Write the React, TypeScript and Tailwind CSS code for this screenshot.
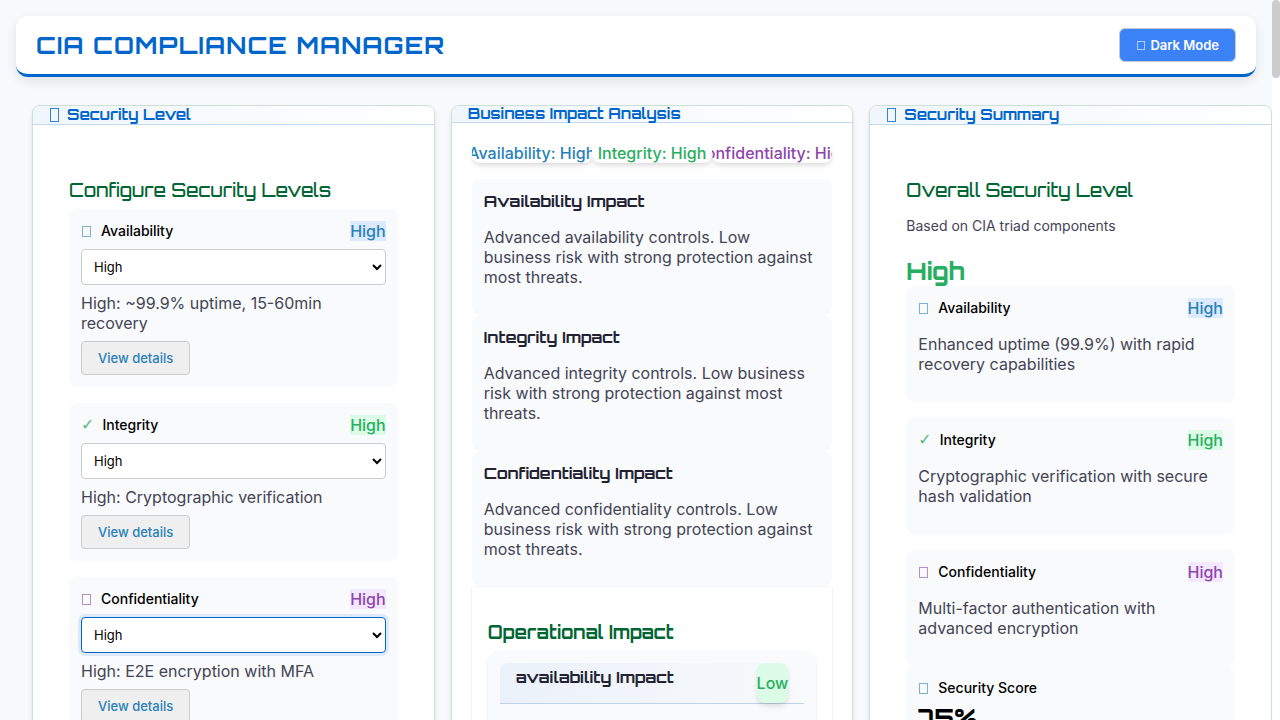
import type { ReactNode } from "react";

type Tone = "blue" | "green" | "purple";

const display = "font-['Orbitron','DejaVu_Sans',sans-serif]";

const toneText: Record<Tone, string> = {
  blue: "text-[#2980b9]",
  green: "text-[#27ae60]",
  purple: "text-[#8e44ad]",
};

const toneBadge: Record<Tone, string> = {
  blue: "bg-[#dbeafe] text-[#2980b9]",
  green: "bg-[#dcfce7] text-[#27ae60]",
  purple: "bg-[#f3e8ff] text-[#8e44ad]",
};

function Glyph({ tone, check }: { tone: Tone; check?: boolean }) {
  if (check) {
    return <span className={`mr-2 font-['DejaVu_Sans',sans-serif] text-base leading-5 opacity-80 ${toneText[tone]}`}>✓</span>;
  }
  return (
    <span
      aria-hidden="true"
      className={`mr-2.5 ml-px inline-block h-[11px] w-[9px] border border-current opacity-60 ${toneText[tone]}`}
    />
  );
}

function Widget({ title, icon, children }: { title: string; icon?: boolean; children: ReactNode }) {
  return (
    <section className="min-w-0 overflow-hidden rounded-lg border border-[#cce0d6] bg-white shadow-md">
      <header
        className={`flex items-center border-b border-[#bfd9f2] bg-linear-to-r from-[#f0f6fc] to-white px-4 text-[#0066cc] ${
          icon ? "h-[19px]" : "h-[17px]"
        }`}
      >
        {icon && (
          <span aria-hidden="true" className="mr-2 ml-px inline-block h-3.5 w-[9px] border border-current opacity-80" />
        )}
        <h2 className={`${display} text-[15px] leading-4 font-bold`}>{title}</h2>
      </header>
      {children}
    </section>
  );
}

function RowHead({ label, tone, check, htmlFor }: { label: string; tone: Tone; check?: boolean; htmlFor?: string }) {
  return (
    <div className="flex h-5 items-center justify-between">
      <div className="flex items-center">
        <Glyph tone={tone} check={check} />
        {htmlFor ? (
          <label htmlFor={htmlFor} className="text-sm font-medium text-black">
            {label}
          </label>
        ) : (
          <h4 className="text-sm font-medium text-black">{label}</h4>
        )}
      </div>
      <span className={`leading-5 font-medium ${toneBadge[tone]}`}>High</span>
    </div>
  );
}

const components: {
  id: string;
  name: string;
  tone: Tone;
  check?: boolean;
  option: string;
  summary: string;
  focused?: boolean;
}[] = [
  {
    id: "availability",
    name: "Availability",
    tone: "blue",
    option: "High: ~99.9% uptime, 15-60min recovery",
    summary: "Enhanced uptime (99.9%) with rapid recovery capabilities",
  },
  {
    id: "integrity",
    name: "Integrity",
    tone: "green",
    check: true,
    option: "High: Cryptographic verification",
    summary: "Cryptographic verification with secure hash validation",
  },
  {
    id: "confidentiality",
    name: "Confidentiality",
    tone: "purple",
    option: "High: E2E encryption with MFA",
    summary: "Multi-factor authentication with advanced encryption",
    focused: true,
  },
];

const impacts = [
  {
    title: "Availability Impact",
    text: "Advanced availability controls. Low business risk with strong protection against most threats.",
  },
  {
    title: "Integrity Impact",
    text: "Advanced integrity controls. Low business risk with strong protection against most threats.",
  },
  {
    title: "Confidentiality Impact",
    text: "Advanced confidentiality controls. Low business risk with strong protection against most threats.",
  },
];

export default function App() {
  return (
    <div className="flex h-screen overflow-hidden bg-[#f8f9fd] font-[Inter,sans-serif] text-base leading-5 text-[#444455]">
      <div className="min-w-0 flex-1">
        <div className="px-4 pt-4">
          <header className="flex items-center justify-between rounded-xl border-b-[3px] border-[#0066cc] bg-white px-5 py-3 shadow-[0_4px_12px_rgba(0,0,0,0.1)]">
            <h1 className={`${display} text-2xl font-bold tracking-wider text-[#0066cc]`}>
              CIA COMPLIANCE MANAGER
            </h1>
            <button
              type="button"
              className="flex h-[34px] items-center rounded-md border border-[#c4c8d0] bg-[#3b82f6] px-4 text-[13px] font-semibold text-white"
            >
              <span
                aria-hidden="true"
                className="mr-[5px] ml-px inline-block h-[9px] w-2 border border-current opacity-60"
              />
              Dark Mode
            </button>
          </header>
        </div>

        <main className="mt-7 grid grid-cols-3 gap-4 pl-8">
          <Widget title="Security Level" icon>
            <div className="px-9 pt-[53px] pb-9">
              <h3 className={`${display} text-lg leading-6 font-medium text-[#006633]`}>Configure Security Levels</h3>
              <div className="mt-[7px] flex flex-col gap-4">
                {components.map((c) => (
                  <div key={c.id} className="rounded-lg bg-[#f8fafc] p-3">
                    <RowHead label={c.name} tone={c.tone} check={c.check} htmlFor={c.id} />
                    <select
                      id={c.id}
                      defaultValue="High"
                      className={`mt-2 block h-9 w-full rounded border bg-white px-2 text-[13px] text-black ${
                        c.focused ? "border-[#0066cc] ring-3 ring-[#0066cc]/10" : "border-[#cccccc]"
                      }`}
                    >
                      <option>None</option>
                      <option>Low</option>
                      <option>Moderate</option>
                      <option>High</option>
                      <option>Very High</option>
                    </select>
                    <p className="mt-2">{c.option}</p>
                    <button
                      type="button"
                      className="mt-2 block h-[34px] rounded border border-[#cccccc] bg-[#efefef] px-4 text-[13px] font-medium text-[#2980b9]"
                    >
                      View details
                    </button>
                  </div>
                ))}
              </div>
            </div>
          </Widget>

          <Widget title="Business Impact Analysis">
            <div className="p-5">
              <div className="grid grid-cols-3">
                {components.map((c) => (
                  <div
                    key={c.id}
                    className={`flex justify-center overflow-hidden rounded-lg bg-white font-medium whitespace-nowrap shadow-md ${toneText[c.tone]}`}
                  >
                    <span>{c.name}: High</span>
                  </div>
                ))}
              </div>
              <div className="mt-4">
                {impacts.map((i) => (
                  <div key={i.title} className="rounded-lg bg-[#f8fafc] px-3 pt-3 pb-7">
                    <h3 className={`${display} text-base leading-5 font-bold text-[#222233]`}>{i.title}</h3>
                    <p className="mt-4">{i.text}</p>
                  </div>
                ))}
              </div>
              <div className="bg-white px-4 pt-[33px] pb-4 shadow-sm">
                <h3 className={`${display} text-lg leading-6 font-bold text-[#006633]`}>Operational Impact</h3>
                <div className="mt-[7px] rounded-xl bg-[#f8fafc] p-3 shadow-sm">
                  <div className="flex h-[41px] justify-between rounded-t-lg border-b border-[#bfd4ea] bg-linear-to-r from-[#ebf1fa] to-[#f8fafc] px-4">
                    <h4 className={`${display} pt-1 text-base leading-5 font-bold text-[#222233]`}>
                      availability Impact
                    </h4>
                    <span className="flex items-center rounded-lg bg-[#dcfce7] font-medium text-[#27ae60] shadow-md">
                      Low
                    </span>
                  </div>
                  <div className="h-40" />
                </div>
              </div>
            </div>
          </Widget>

          <Widget title="Security Summary" icon>
            <div className="px-9 pt-[53px] pb-9">
              <h3 className={`${display} text-lg leading-6 font-medium text-[#006633]`}>Overall Security Level</h3>
              <p className="mt-3.5 text-sm leading-5">Based on CIA triad components</p>
              <p className={`${display} mt-5 text-2xl leading-[30px] font-extrabold text-[#27ae60]`}>High</p>
              <div className="flex flex-col gap-4">
                {components.map((c) => (
                  <div key={c.id} className="rounded-lg bg-[#f8fafc] px-3 pt-3 pb-7">
                    <RowHead label={c.name} tone={c.tone} check={c.check} />
                    <p className="mt-4">{c.summary}</p>
                  </div>
                ))}
              </div>
              <div className="rounded-lg bg-[#f8fafc] p-3">
                <div className="flex h-5 items-center">
                  <Glyph tone="blue" />
                  <h4 className="text-sm font-medium text-black">Security Score</h4>
                </div>
                <p className={`${display} mt-1 text-2xl leading-[30px] font-extrabold text-black`}>75%</p>
              </div>
            </div>
          </Widget>
        </main>
      </div>
      <div aria-hidden="true" className="w-2 shrink-0 bg-white">
        <div className="h-[78px] rounded bg-[#cccccc]" />
      </div>
    </div>
  );
}
